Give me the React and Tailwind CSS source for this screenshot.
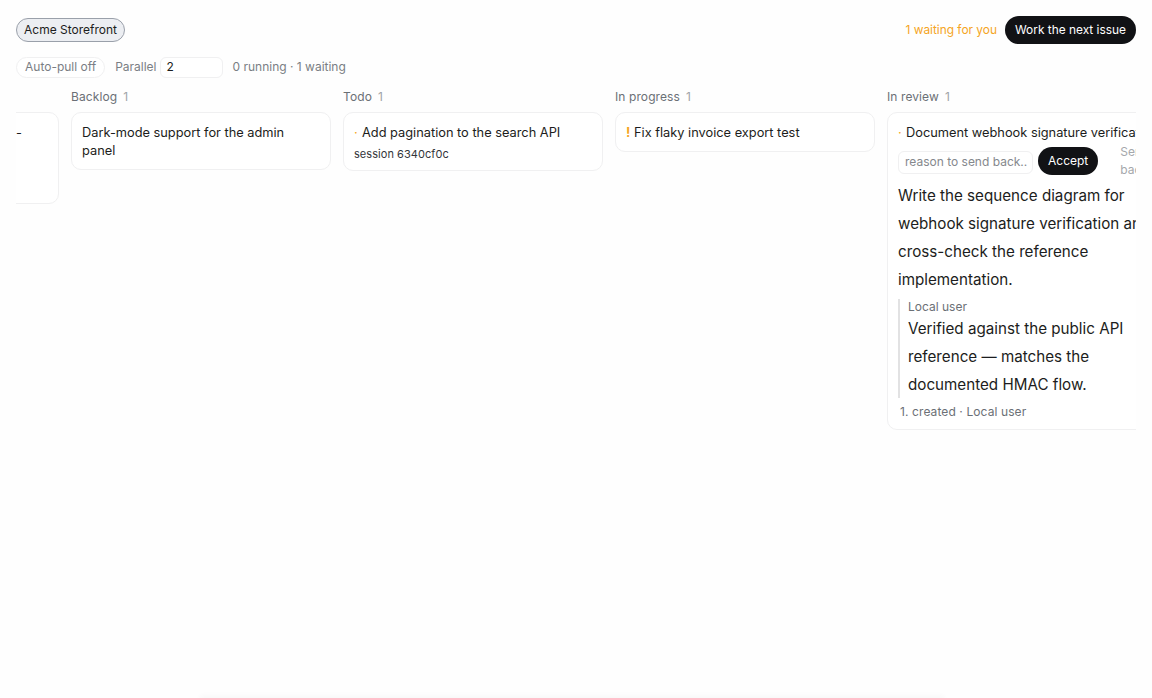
function Column({ name, count, children }) {
  return (
    <div className="w-[260px] shrink-0">
      <div className="flex gap-[6px] h-[18px] items-center text-[12px] tracking-[0.1px] text-[#6b7076] mb-[6px]">
        <span>{name}</span>
        <span className="text-[#a0a4a8]">{count}</span>
      </div>
      {children}
    </div>
  );
}

function Card({ children }) {
  return (
    <div className="bg-white border border-[#f0f0f1] rounded-[10px] px-[10px] pt-[11px] pb-[9px] text-[12.8px] leading-[18px] text-[#1c1d20]">
      {children}
    </div>
  );
}

export default function App() {
  return (
    <div className="relative h-[698px] overflow-hidden bg-[#fefefe] px-4 font-['Inter',sans-serif]">
      <div className="flex items-center justify-between h-[28px] mt-4 pt-0">
        <button className="h-[24px] px-[7px] rounded-full border border-[#9aa0aa] bg-[#eceef2] text-[12px] text-[#1c1d20]">
          Acme Storefront
        </button>
        <div className="flex items-center gap-2">
          <span className="text-[11.9px] text-[#f5a524]">1 waiting for you</span>
          <button className="h-[28px] px-[10px] rounded-full bg-[#111215] text-white text-[11.9px]">
            Work the next issue
          </button>
        </div>
      </div>

      <div className="flex items-center h-[22px] mt-[12px] text-[12px] text-[#7a7e84]">
        <button className="h-[21px] px-2 rounded-full border border-[#f0f0f1] bg-white text-[#7a7e84]">
          Auto-pull off
        </button>
        <span className="ml-[10px]">Parallel</span>
        <div className="ml-[3px] w-[63px] h-[21px] px-[6px] flex items-center rounded-[6px] border border-[#f0f0f1] bg-white text-[#1c1d20]">
          2
        </div>
        <span className="ml-[10px]">0 running · 1 waiting</span>
      </div>

      <div className="overflow-hidden mt-[10px]">
        <div className="flex gap-3 ml-[-217px]">
          <Column>
            <Card>
              <div className="h-[70px] pl-[206px]">-</div>
            </Card>
          </Column>

          <Column name="Backlog" count="1">
            <Card>Dark-mode support for the admin panel</Card>
          </Column>

          <Column name="Todo" count="1">
            <Card>
              <div className="flex">
                <span className="text-[#f5a524] w-[8px] shrink-0">·</span>
                <span>Add pagination to the search API</span>
              </div>
              <div className="text-[11px] leading-[13px] tracking-[0.05px] mt-[6px] text-[#33353a]">session 6340cf0c</div>
            </Card>
          </Column>

          <Column name="In progress" count="1">
            <Card>
              <div className="flex">
                <span className="text-[#f5a524] font-bold w-[8px] shrink-0">!</span>
                <span>Fix flaky invoice export test</span>
              </div>
            </Card>
          </Column>

          <Column name="In review" count="1">
            <Card>
              <div className="flex whitespace-nowrap">
                <span className="text-[#f5a524] w-[8px] shrink-0">·</span>
                <span>Document webhook signature verification</span>
              </div>
              <div className="flex items-center gap-[5px] mt-[4px] h-[30px]">
                <div className="w-[135px] h-[23px] mt-[2px] px-[6px] flex items-center shrink-0 rounded-[6px] border border-[#f0f0f1] bg-white text-[12px] text-[#85888d] whitespace-nowrap overflow-hidden">
                  reason to send back..
                </div>
                <button className="h-[28px] px-[10px] shrink-0 rounded-full bg-[#111215] text-white text-[12px]">
                  Accept
                </button>
                <div className="ml-[17px] text-[12px] leading-[18px] text-[#a5a8ac]">
                  Send back
                </div>
              </div>
              <div className="w-[262px] text-[15.2px] leading-[28px] mt-[6px] text-[#1c1d20]">
                Write the sequence diagram for webhook signature verification and cross-check the reference implementation.
              </div>
              <div className="w-[238px] h-[99px] border-l-2 border-[#e2e2e3] pl-[8px] mt-[5px]">
                <div className="text-[12px] leading-[15px] text-[#6b7076]">Local user</div>
                <div className="text-[15.2px] leading-[28px] mt-[1px]">
                  Verified against the public API reference — matches the documented HMAC flow.
                </div>
              </div>
              <div className="text-[12px] leading-[17px] tracking-[0.1px] text-[#6b7076] mt-[5px] pl-[2px]">
                1. created · Local user
              </div>
            </Card>
          </Column>
        </div>
      </div>

      <div className="absolute left-[200px] top-[698px] w-[744px] h-[40px] shadow-[0_-2px_6px_rgba(0,0,0,0.03)]"></div>
    </div>
  );
}
